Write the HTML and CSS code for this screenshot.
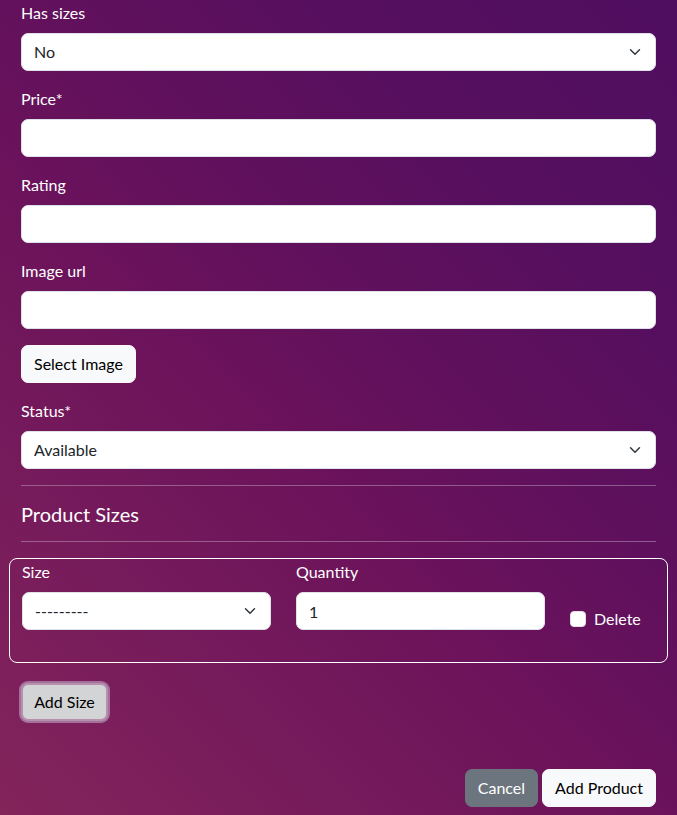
FILE: index.html
```html
<!DOCTYPE html>
<html lang="en">
<head>
<meta charset="utf-8">
<title>Add Product</title>
<link rel="stylesheet" href="styles.css">
</head>
<body>
<form class="form">
  <div class="field">
    <label class="label">Has sizes</label>
    <select class="control select"><option>No</option></select>
  </div>
  <div class="field">
    <label class="label">Price*</label>
    <input class="control" type="text">
  </div>
  <div class="field">
    <label class="label">Rating</label>
    <input class="control" type="text">
  </div>
  <div class="field">
    <label class="label">Image url</label>
    <input class="control" type="text">
  </div>
  <div class="field">
    <button type="button" class="btn btn-light">Select Image</button>
  </div>
  <div class="field">
    <label class="label">Status*</label>
    <select class="control select"><option>Available</option></select>
  </div>
  <hr class="rule">
  <h5 class="heading">Product Sizes</h5>
  <hr class="rule">
  <div class="size-box">
    <div class="size-col">
      <label class="label">Size</label>
      <select class="control select"><option>---------</option></select>
    </div>
    <div class="size-col">
      <label class="label">Quantity</label>
      <input class="control" type="text" value="1">
    </div>
    <div class="check-col">
      <input class="check" type="checkbox" id="del">
      <label class="check-label" for="del">Delete</label>
    </div>
  </div>
  <button type="button" class="btn btn-add">Add Size</button>
  <div class="actions">
    <button type="button" class="btn btn-secondary">Cancel</button>
    <button type="button" class="btn btn-light">Add Product</button>
  </div>
</form>
</body>
</html>
```
FILE: styles.css
```css
html, body {
  margin: 0;
  height: 100%;
}
body {
  font-family: Lato, "Open Sans", sans-serif;
  font-size: 16px;
  line-height: 24px;
  color: #fff;
  background: linear-gradient(45deg, #83245b 0%, #6a125b 45%, #560f5e 75%, #500e60 100%);
  background-attachment: fixed;
}
.form {
  padding: 1px 21px 0;
  display: flex;
  flex-direction: column;
}
.field {
  margin-bottom: 16px;
}
.label {
  display: block;
  margin-bottom: 8px;
  color: #fff;
}
.control {
  display: block;
  box-sizing: border-box;
  width: 100%;
  height: 38px;
  padding: 6px 12px;
  font-family: inherit;
  font-size: 16px;
  line-height: 24px;
  color: #212529;
  background-color: #fff;
  border: 1px solid #dee2e6;
  border-radius: 7px;
  outline: none;
}
.select {
  appearance: none;
  -webkit-appearance: none;
  padding-right: 36px;
  background-image: url("data:image/svg+xml,%3csvg xmlns='http://www.w3.org/2000/svg' viewBox='0 0 16 16'%3e%3cpath fill='none' stroke='%23343a40' stroke-linecap='round' stroke-linejoin='round' stroke-width='2' d='m2 5 6 6 6-6'/%3e%3c/svg%3e");
  background-repeat: no-repeat;
  background-position: right 12px center;
  background-size: 16px 12px;
}
.btn {
  box-sizing: border-box;
  height: 38px;
  padding: 6px 12px;
  font-family: inherit;
  font-size: 16px;
  line-height: 24px;
  border: 1px solid transparent;
  border-radius: 7px;
  cursor: pointer;
}
.btn-light {
  background: #f8f9fa;
  color: #000;
  border-color: #f8f9fa;
}
.btn-secondary {
  background: #6c757d;
  color: #fff;
  border-color: #6c757d;
}
.rule {
  margin: 0 0 16px;
  border: 0;
  border-top: 1px solid rgba(255, 255, 255, 0.3);
  height: 0;
}
.heading {
  margin: 0 0 15px;
  font-size: 20px;
  font-weight: 400;
  line-height: 24px;
}
.size-box {
  margin: 0 -12px;
  padding: 1px 12px 31px;
  border: 1px solid #fff;
  border-radius: 8px;
  display: grid;
  grid-template-columns: 249px 249px auto;
  column-gap: 25px;
}
.check-col {
  display: flex;
  align-items: center;
  gap: 8px;
  padding-top: 47px;
  height: 24px;
}
.check {
  appearance: none;
  -webkit-appearance: none;
  margin: 0;
  width: 16px;
  height: 16px;
  background: #fff;
  border: 1px solid #e6dfe8;
  border-radius: 4px;
}
.check-label {
  font-size: 16px;
}
.btn-add {
  align-self: flex-start;
  margin: 20px 0 0 0;
  width: 87px;
  padding: 0;
  background: #d3d4d5;
  color: #000;
  border: 2px solid #b98fb0;
  box-shadow: 0 0 0 2px #a1719a;
}
.actions {
  display: flex;
  justify-content: flex-end;
  gap: 4px;
  margin-top: 48px;
}
```
